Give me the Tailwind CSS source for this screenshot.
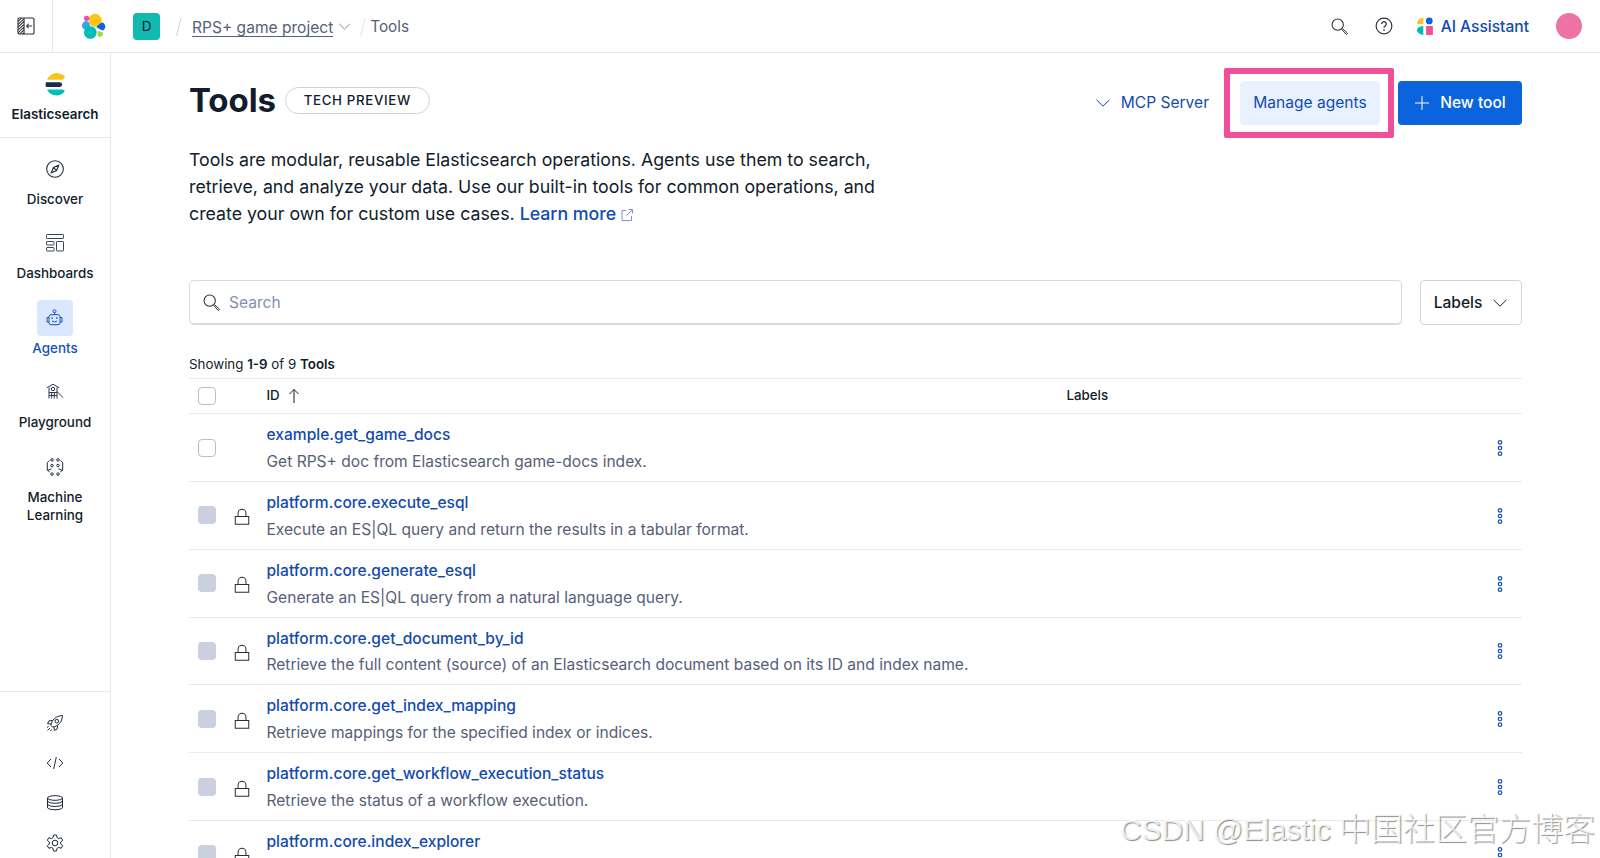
<!doctype html>
<html lang="en">
  <head>
    <meta charset="UTF-8" />
    <meta name="viewport" content="width=device-width, initial-scale=1" />
    <title>Tools</title>
    <script src="https://cdn.jsdelivr.net/npm/@tailwindcss/browser@4"></script>
  </head>
  <body class="h-[858px] overflow-hidden bg-white font-['Inter',sans-serif] text-[15.57px] text-[#111c2c]">
    <!-- Shared icons -->
    <svg class="hidden">
      <symbol id="search" viewBox="0 0 16 16">
        <circle cx="6.3" cy="6.3" r="5.3" fill="none" stroke="currentColor" />
        <path d="M10.3 10.9l.7-.7 4.1 3.7a.8.8 0 0 1-1.2 1.2z" fill="none" stroke="currentColor" stroke-width=".9" />
      </symbol>
      <symbol id="down" viewBox="0 0 16 16">
        <path d="M1.5 4.8L8 11.2l6.5-6.4" fill="none" stroke="currentColor" />
      </symbol>
      <symbol id="lock" viewBox="0 0 16 16">
        <path d="M2 7.5h12v7H2zM4.5 7.5V4.6a3.5 3.5 0 0 1 7 0v2.9" fill="none" stroke="currentColor" stroke-width=".9" />
      </symbol>
      <symbol id="dots" viewBox="0 0 16 16">
        <g fill="none" stroke="currentColor" stroke-width="1.1">
          <circle cx="8" cy="3" r="1.55" />
          <circle cx="8" cy="8" r="1.55" />
          <circle cx="8" cy="13" r="1.55" />
        </g>
      </symbol>
    </svg>

    <!-- Top bar -->
    <header class="flex h-[53px] items-center border-b border-[#e4e8ee]">
      <div class="flex h-full w-[53px] shrink-0 items-center justify-center border-r border-[#e4e8ee]">
        <svg class="size-[18px]" viewBox="0 0 16 16" fill="none" stroke="#2b2f36">
          <rect x=".9" y=".9" width="14.2" height="14.2" rx="1.2" />
          <path d="M6.3 1v14M1 4l3-3M1 6.5L6 1.8M1 9l5-4.8M1 11.5l5-4.8M1 14l5-4.8M2.5 15L6 11.6M5 15l1-1" stroke-width=".9" />
          <path d="M13.5 8H8.5M10.5 6l-2 2 2 2" stroke-width=".9" />
        </svg>
      </div>
      <svg class="ml-[27px] size-[26px] shrink-0" viewBox="0 0 32 32">
        <circle cx="18.7" cy="9" r="8" fill="#fec514" />
        <circle cx="8.2" cy="6.6" r="3.3" fill="#f04e98" />
        <path d="M4 11.6a5.4 5.4 0 0 1 7.5.4l1 4.5-6 4A5.2 5.2 0 0 1 4 11.6z" fill="#36a2ef" />
        <path d="M26.5 11.6a5.2 5.2 0 0 1 1.3 10l-7.3-3.7.5-1.8z" fill="#0b64dd" />
        <circle cx="12.7" cy="24" r="7.8" fill="#02bcb7" />
        <path d="M21.5 22l6 1.8a3.4 3.4 0 0 1-5.7 4z" fill="#9adc30" />
      </svg>
      <div class="ml-[27px] flex size-[27px] items-center justify-center rounded-[4px] bg-[#12b9ae] pt-px text-[13.5px]">D</div>
      <svg class="mt-px ml-[15px] h-[18px] w-2 text-[#cad3e2]" viewBox="0 0 8 18"><path d="M6 0L1.5 18" stroke="currentColor" /></svg>
      <a class="mt-[3px] ml-[9px] border-b border-[#516381] leading-[17px] text-[#566079]">RPS+ game project</a>
      <svg class="ml-[5px] size-[13px] text-[#69707d]"><use href="#down" /></svg>
      <svg class="mt-px ml-2 h-[18px] w-2 text-[#dfe5ef]" viewBox="0 0 8 18"><path d="M6 0L1.5 18" stroke="currentColor" /></svg>
      <span class="mt-[2px] ml-[3px] text-[15.3px] text-[#566079]">Tools</span>
      <div class="ml-auto flex items-center">
        <svg class="size-[17px] text-[#2b2f36]"><use href="#search" /></svg>
        <svg class="ml-[27px] size-[18px]" viewBox="0 0 16 16" fill="none" stroke="#2b2f36">
          <circle cx="8" cy="8" r="7" />
          <path d="M6 6.2A2 2 0 1 1 9.3 7.7C8.5 8.3 8 8.5 8 9.5" stroke-width="1.1" />
          <path d="M8 10.9v1.3" stroke-width="1.3" />
        </svg>
        <svg class="ml-[23px] size-[18px]" viewBox="0 0 16 16">
          <path d="M6.5.7v5.8H.9C.9 3.3 3.3.8 6.5.7z" fill="#f9c31f" />
          <circle cx="11.8" cy="3.5" r="3" fill="#0b64dd" />
          <path d="M6.5 8v8C2.8 15.5.8 13.3.8 11.8S2.5 8.2 6.5 8z" fill="#02bcb7" />
          <path d="M9 8h6v8H9z" fill="#f04e98" />
        </svg>
        <span class="mt-[2px] ml-[7px] font-medium text-[#134bb0]">AI Assistant</span>
        <div class="mr-[18px] ml-[27px] size-[26px] rounded-full bg-[#ee72a6]"></div>
      </div>
    </header>

    <div class="flex h-[805px]">
      <!-- Side navigation -->
      <nav class="flex w-[111px] shrink-0 flex-col border-r border-[#e4e8ee] text-center text-[13.4px] leading-[18px] font-medium">
        <div class="flex h-[85px] shrink-0 flex-col items-center border-b border-[#e4e8ee] pt-5">
          <svg class="h-[23px] w-[20px]" viewBox="0 0 20 23">
            <path d="M2 6.7A10.5 10.5 0 0 1 18 2a2 2 0 0 1 1.5 2.7Q18.5 6.7 17 6.7z" fill="#f9c31f" />
            <path d="M.9 9.2h13.8a2.4 2.4 0 0 1 0 4.8H.9A10 10 0 0 1 .9 9.2z" fill="#1b2a4a" />
            <path d="M2 16.5h15.5q2.3.3 2 2.2A10.5 10.5 0 0 1 2 16.5z" fill="#02bcb7" />
          </svg>
          <span class="mt-[9px] text-[13.4px] font-semibold">Elasticsearch</span>
        </div>
        <a class="mt-[13px] flex flex-col items-center gap-[3px]">
          <span class="flex size-[36px] items-center justify-center">
            <svg class="size-[18px]" viewBox="0 0 16 16" fill="none" stroke="#1d2a3e" stroke-width=".95">
              <circle cx="8" cy="8" r="7.4" />
              <path d="M11.3 4.7L9.4 9.4 4.7 11.3 6.6 6.6zM6.6 6.6l2.8 2.8" />
            </svg>
          </span>
          Discover
        </a>
        <a class="mt-[17.4px] flex flex-col items-center gap-[3px]">
          <span class="flex size-[36px] items-center justify-center">
            <svg class="size-[18px]" viewBox="0 0 18 18" fill="none" stroke="#38465b">
              <rect x=".5" y=".5" width="17" height="4" rx=".6" />
              <rect x=".5" y="7.5" width="7.5" height="3.5" rx=".6" />
              <rect x=".5" y="13.5" width="7.5" height="3.5" rx=".6" />
              <rect x="10.5" y="7.5" width="7" height="9.5" rx=".6" />
            </svg>
          </span>
          Dashboards
        </a>
        <a class="mt-[17.6px] flex flex-col items-center gap-[3px] text-[#1750ba]">
          <span class="flex size-[36px] items-center justify-center rounded-[4px] bg-[#d9e8ff]">
            <svg class="size-[18px]" viewBox="0 0 18 18" fill="none" stroke="#1750ba">
              <circle cx="8.5" cy="2.3" r="1.5" />
              <path d="M8.5 3.8v2M5 5.7h7q2 0 2 2v6q0 2-2 2H5q-2 0-2-2v-6q0-2 2-2zM3 8.5H1v4.5h2M14 8.5h2v4.5h-2M6 12q2.5 2 5 0" />
              <path d="M6.1 8.2v1.6M10.9 8.2v1.6" stroke-width="1.4" />
            </svg>
          </span>
          Agents
        </a>
        <a class="mt-[17.4px] flex flex-col items-center gap-[3px]">
          <span class="flex size-[36px] items-center justify-center">
            <svg class="size-[18px]" viewBox="0 0 18 18" fill="none" stroke="#2b394f">
              <path d="M.8 4.8L7 1.2l6.200 3.600M3 4.500v11M11 4.500v11M3 9.500h8M3 12.500h8M5.700 9.500v6M8.300 9.500v6M11 8.500l6 6" />
              <circle cx="7" cy="6" r="1.7" />
            </svg>
          </span>
          Playground
        </a>
        <a class="mt-[17.5px] flex flex-col items-center gap-[3px]">
          <span class="flex size-[36px] items-center justify-center">
            <svg class="size-[18px]" viewBox="0 0 18 18" fill="none" stroke="#1d2a3e">
              <circle cx="6" cy="1.9" r="1.25" />
              <circle cx="12" cy="1.9" r="1.25" />
              <circle cx="6" cy="7.5" r="1.25" />
              <circle cx="12" cy="7.5" r="1.25" />
              <circle cx="6" cy="16.1" r="1.25" />
              <circle cx="12" cy="16.1" r="1.25" />
              <path d="M3.5 2.5L1.3 4.5v7.5l2.4 2M14.5 2.5l2.2 2v7.5l-2.4 2M1.5 12.5L5.5 10.8M16.5 12.5L12.5 10.8" />
            </svg>
          </span>
          <span>Machine<br />Learning</span>
        </a>
        <div class="mt-auto flex h-[167px] flex-col items-center gap-[22px] border-t border-[#e4e8ee] pt-[22px]">
          <svg class="size-[18px] shrink-0" viewBox="0 0 18 18" fill="none" stroke="#1d2a3e">
            <path d="M5 11.5C5.5 6 10 1.8 16.5 1.5 16.2 8 12 12.5 6.5 13zM6.5 6.5L3 6.8 1.5 9.7l3.7.3M11.5 11.5l-.3 3.5-2.9 1.5-.3-3.7M1 13.5l1.5-1M1.5 16.5l2.5-2.5M4.5 17l1-1.5" />
            <circle cx="10.8" cy="7.2" r="1.8" />
          </svg>
          <svg class="size-[18px] shrink-0" viewBox="0 0 18 18" fill="none" stroke="#1d2a3e">
            <path d="M5 5L1.2 9 5 13M13 5l3.8 4L13 13M10.3 3L7.7 15" />
          </svg>
          <svg class="size-[18px] shrink-0" viewBox="0 0 18 18" fill="none" stroke="#1d2a3e">
            <ellipse cx="9" cy="4" rx="7.5" ry="2.3" />
            <path d="M1.5 4v9.8q1.5 2 7.5 2t7.5-2V4M1.5 7.3q1.5 2 7.5 2t7.5-2M1.5 10.5q1.5 2 7.5 2t7.5-2" />
          </svg>
          <svg class="size-[18px] shrink-0" viewBox="0 0 18 18" fill="none" stroke="#1d2a3e">
            <circle cx="9" cy="9" r="2.8" />
            <path d="M7.500 1h3l.5 2.600 1.700 1 2.500-.9 1.500 2.600-2 1.700v2l2 1.700-1.500 2.600-2.500-.9-1.700 1-.5 2.600h-3L7 14.400l-1.700-1-2.500.9-1.500-2.600 2-1.700v-2l-2-1.700 1.500-2.600 2.500.9 1.700-1z" stroke-linejoin="round" />
          </svg>
        </div>
      </nav>

      <main class="flex-1 overflow-hidden pr-[78px] pl-[78px]">
        <div class="flex items-start">
          <h1 class="mt-[24px] text-[33px] leading-[46px] font-bold tracking-[-.1px]">Tools</h1>
          <span class="mt-[33.5px] ml-[9px] flex h-[27px] w-[145px] items-center justify-center rounded-full border border-[#cfd4dc] pt-[2px] text-[13.3px] font-medium tracking-[.65px]">TECH PREVIEW</span>
          <div class="mt-[14.5px] ml-auto flex items-center">
            <svg class="size-4 text-[#134bb0]"><use href="#down" /></svg>
            <span class="ml-[10px] text-[#134bb0]">MCP Server</span>
            <div class="ml-[15px] flex h-[70px] w-[170px] items-center justify-center rounded-[2px] border-6 border-[#ee4f98] pl-[2px]">
              <button class="h-[44px] w-[140px] rounded-[5px] bg-[#e8f1ff] text-[#134bb0]">Manage agents</button>
            </div>
            <button class="ml-1 flex h-[44px] w-[124px] items-center justify-center gap-[10px] rounded-[4px] bg-[#0b64dd] font-medium text-white">
              <svg class="size-4" viewBox="0 0 16 16"><path d="M8 1v14M1 8h14" stroke="currentColor" /></svg>
              New tool
            </button>
          </div>
        </div>

        <p class="mt-[9.5px] w-[720px] text-[17.75px] leading-[26.8px]">
          Tools are modular, reusable Elasticsearch operations. Agents use them to search,<br />
          retrieve, and analyze your data. Use our built-in tools for common operations, and<br />
          create your own for custom use cases.
          <a class="font-medium text-[#134bb0]">Learn more<svg class="ml-[5px] inline size-[12px]" viewBox="0 0 12 12" fill="none" stroke="#7f93c8"><path d="M5 1.5H1v10h9.5V7M7.5.5h4v4M11.5.5l-6 6" /></svg></a>
        </p>

        <!-- Filters -->
        <div class="mt-[53px] flex gap-[18px]">
          <div class="flex h-[45px] flex-1 items-center gap-[9px] rounded-[5px] border border-b-2 border-[#d6dbe2] pl-[13px] text-[#8491ad]">
            <svg class="size-[17px] text-[#2b2f36]"><use href="#search" /></svg>
            <span class="pt-px">Search</span>
          </div>
          <button class="flex h-[45px] w-[102px] items-center justify-center gap-[10px] rounded-[4px] border border-[#d0d5dc] font-medium">
            Labels
            <svg class="size-4"><use href="#down" /></svg>
          </button>
        </div>

        <div class="mt-[30px] h-[18px] text-[13.35px] leading-[18px]">Showing <b class="font-semibold">1-9</b> of 9 <b class="font-semibold">Tools</b></div>

        <!-- Tools table -->
        <div class="mt-[4.8px] flex h-[36px] items-center border-y border-[#e6e9ed] text-[13.3px] font-medium">
          <div class="ml-[8.5px] size-[18px] rounded-[4px] border border-[#b9bec7]"></div>
          <span class="ml-[51px]">ID</span>
          <svg class="ml-[6px] size-[16px]" viewBox="0 0 16 16"><path d="M8 15V1.5M3.5 6L8 1.5 12.5 6" fill="none" stroke="currentColor" /></svg>
          <span class="ml-auto w-[455.5px]">Labels</span>
        </div>
        <div class="flex h-[67.8px] items-center border-b border-[#e6e9ed]">
          <div class="ml-[8.5px] size-[18px] rounded-[4px] border border-[#b9bec7]"></div>
          <div class="w-[51px]"></div>
          <div class="pt-[3px] leading-[26.8px]">
            <div class="font-medium text-[#134bb0]">example.get_game_docs</div>
            <div class="text-[#566079]">Get RPS+ doc from Elasticsearch game-docs index.</div>
          </div>
          <svg class="mt-px mr-[13px] ml-auto size-[18px] text-[#1750ba]"><use href="#dots" /></svg>
        </div>
        <div class="flex h-[67.8px] items-center border-b border-[#e6e9ed]">
          <div class="ml-[8.5px] size-[18px] rounded-[4px] bg-[#cad0e0]"></div>
          <div class="w-[51px] pt-1 pl-[17px]"><svg class="size-[18px] text-[#2b2f36]"><use href="#lock" /></svg></div>
          <div class="pt-[3px] leading-[26.8px]">
            <div class="font-medium text-[#134bb0]">platform.core.execute_esql</div>
            <div class="text-[#566079]">Execute an ES|QL query and return the results in a tabular format.</div>
          </div>
          <svg class="mt-px mr-[13px] ml-auto size-[18px] text-[#1750ba]"><use href="#dots" /></svg>
        </div>
        <div class="flex h-[67.8px] items-center border-b border-[#e6e9ed]">
          <div class="ml-[8.5px] size-[18px] rounded-[4px] bg-[#cad0e0]"></div>
          <div class="w-[51px] pt-1 pl-[17px]"><svg class="size-[18px] text-[#2b2f36]"><use href="#lock" /></svg></div>
          <div class="pt-[3px] leading-[26.8px]">
            <div class="font-medium text-[#134bb0]">platform.core.generate_esql</div>
            <div class="text-[#566079]">Generate an ES|QL query from a natural language query.</div>
          </div>
          <svg class="mt-px mr-[13px] ml-auto size-[18px] text-[#1750ba]"><use href="#dots" /></svg>
        </div>
        <div class="flex h-[67.8px] items-center border-b border-[#e6e9ed]">
          <div class="ml-[8.5px] size-[18px] rounded-[4px] bg-[#cad0e0]"></div>
          <div class="w-[51px] pt-1 pl-[17px]"><svg class="size-[18px] text-[#2b2f36]"><use href="#lock" /></svg></div>
          <div class="pt-[3px] leading-[26.8px]">
            <div class="font-medium text-[#134bb0]">platform.core.get_document_by_id</div>
            <div class="text-[#566079]">Retrieve the full content (source) of an Elasticsearch document based on its ID and index name.</div>
          </div>
          <svg class="mt-px mr-[13px] ml-auto size-[18px] text-[#1750ba]"><use href="#dots" /></svg>
        </div>
        <div class="flex h-[67.8px] items-center border-b border-[#e6e9ed]">
          <div class="ml-[8.5px] size-[18px] rounded-[4px] bg-[#cad0e0]"></div>
          <div class="w-[51px] pt-1 pl-[17px]"><svg class="size-[18px] text-[#2b2f36]"><use href="#lock" /></svg></div>
          <div class="pt-[3px] leading-[26.8px]">
            <div class="font-medium text-[#134bb0]">platform.core.get_index_mapping</div>
            <div class="text-[#566079]">Retrieve mappings for the specified index or indices.</div>
          </div>
          <svg class="mt-px mr-[13px] ml-auto size-[18px] text-[#1750ba]"><use href="#dots" /></svg>
        </div>
        <div class="flex h-[67.8px] items-center border-b border-[#e6e9ed]">
          <div class="ml-[8.5px] size-[18px] rounded-[4px] bg-[#cad0e0]"></div>
          <div class="w-[51px] pt-1 pl-[17px]"><svg class="size-[18px] text-[#2b2f36]"><use href="#lock" /></svg></div>
          <div class="pt-[3px] leading-[26.8px]">
            <div class="font-medium text-[#134bb0]">platform.core.get_workflow_execution_status</div>
            <div class="text-[#566079]">Retrieve the status of a workflow execution.</div>
          </div>
          <svg class="mt-px mr-[13px] ml-auto size-[18px] text-[#1750ba]"><use href="#dots" /></svg>
        </div>
        <div class="flex h-[67.8px] items-center border-b border-[#e6e9ed]">
          <div class="ml-[8.5px] size-[18px] rounded-[4px] bg-[#cad0e0]"></div>
          <div class="w-[51px] pt-1 pl-[17px]"><svg class="size-[18px] text-[#2b2f36]"><use href="#lock" /></svg></div>
          <div class="pt-[3px] leading-[26.8px]">
            <div class="font-medium text-[#134bb0]">platform.core.index_explorer</div>
            <div class="text-[#566079]">&nbsp;</div>
          </div>
          <svg class="mt-px mr-[13px] ml-auto size-[18px] text-[#1750ba]"><use href="#dots" /></svg>
        </div>
      </main>
    </div>

    <!-- Watermark -->
    <div class="absolute right-[5px] bottom-[8px] font-['Liberation_Sans','Noto_Sans_CJK_SC',sans-serif] text-[29.8px] leading-[40px] font-light whitespace-nowrap text-white/80 [text-shadow:1px_1px_1px_rgb(0_0_0/.45)]">CSDN @Elastic <span class="text-[32px]">中国社区官方博客</span></div>
  </body>
</html>
